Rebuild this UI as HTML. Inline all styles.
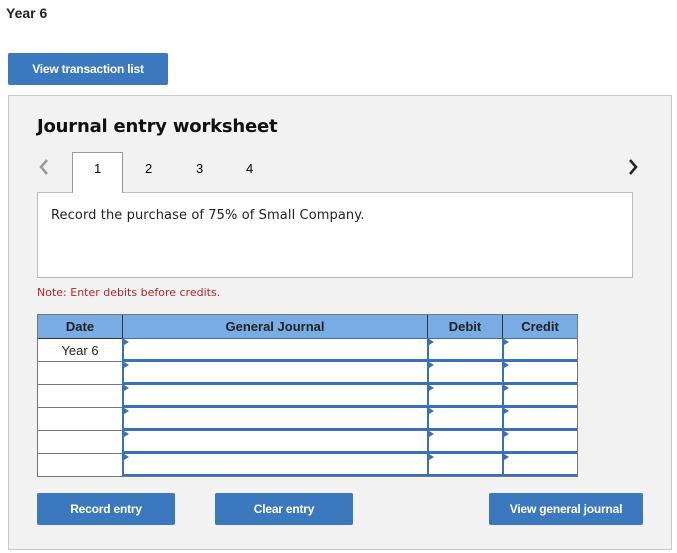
<!DOCTYPE html>
<html><head><style>
*{margin:0;padding:0;box-sizing:border-box}
body{width:677px;height:553px;background:#fff;font-family:"Liberation Sans",Arial,sans-serif;position:relative;overflow:hidden}
.a{position:absolute}
.btn{position:absolute;background:#3b78bd;color:#fff;font-weight:bold;font-size:12px;display:flex;align-items:center;justify-content:center;border-radius:2px;letter-spacing:-0.2px}
.cell{position:absolute;background:#fff}
.in{position:absolute;background:#fff;border-left:2px solid #3a70b5;border-bottom:2px solid #3a70b5;border-top:1px solid #3a70b5}
.in:before{content:"";position:absolute;left:0;top:0;border-left:5px solid #3a70b5;border-top:3px solid transparent;border-bottom:3px solid transparent}
.th{position:absolute;top:319px;text-align:center;font-size:13px;font-weight:bold;color:#222}
</style></head><body>
<div class="a" style="left:6px;top:5px;font-size:14px;font-weight:bold;color:#222">Year 6</div>
<div class="btn" style="left:8px;top:53px;width:160px;height:32px">View transaction list</div>
<div class="a" style="left:8px;top:95px;width:664px;height:455px;background:#f2f2f2;border:1px solid #c8c8c8"></div>
<div class="a" style="left:37px;top:116px;font-size:18px;font-weight:bold;font-family:'DejaVu Sans',sans-serif;color:#111;letter-spacing:-0.2px">Journal entry worksheet</div>
<svg class="a" style="left:38px;top:158px" width="12" height="18"><path d="M9 2 L3 9 L9 16" stroke="#999" stroke-width="2.5" fill="none"/></svg>
<svg class="a" style="left:627px;top:158px" width="12" height="18"><path d="M3 2 L9 9 L3 16" stroke="#222" stroke-width="2.5" fill="none"/></svg>
<div class="a" style="left:37px;top:192px;width:596px;height:86px;background:#fff;border:1px solid #bbb"></div>
<div class="a" style="left:72px;top:152px;width:51px;height:41px;background:#fff;border:1px solid #999;border-bottom:none"></div>
<div class="a" style="left:94px;top:161px;font-size:13px">1</div>
<div class="a" style="left:145px;top:161px;font-size:13px">2</div>
<div class="a" style="left:196px;top:161px;font-size:13px">3</div>
<div class="a" style="left:246px;top:161px;font-size:13px">4</div>
<div class="a" style="left:51px;top:208px;font-size:13px;font-family:'DejaVu Sans',sans-serif;color:#222;letter-spacing:0.1px">Record the purchase of 75% of Small Company.</div>
<div class="a" style="left:37px;top:286px;font-size:11px;font-family:'DejaVu Sans',sans-serif;color:#b0262a">Note: Enter debits before credits.</div>
<div class="a" style="left:37px;top:314px;width:541px;height:163px;background:#777"></div>
<div class="a" style="left:38px;top:315px;width:539px;height:23px;background:#79ace2"></div>
<div class="a" style="left:122px;top:315px;width:1px;height:23px;background:#333"></div>
<div class="a" style="left:427px;top:315px;width:1px;height:23px;background:#333"></div>
<div class="a" style="left:502px;top:315px;width:1px;height:23px;background:#333"></div>
<div class="a" style="left:38px;top:338px;width:539px;height:1px;background:#333"></div>
<div class="th" style="left:38px;width:84px">Date</div>
<div class="th" style="left:123px;width:304px">General Journal</div>
<div class="th" style="left:428px;width:74px">Debit</div>
<div class="th" style="left:503px;width:74px">Credit</div>
<div id="rows"></div>
<script>
var h='';for(var i=0;i<6;i++){var y=339+i*23;
h+='<div class="cell" style="left:38px;top:'+y+'px;width:84px;height:22px"></div>';
h+='<div class="in" style="left:122px;top:'+(y-1)+'px;width:305px;height:23px"></div>';
h+='<div class="in" style="left:427px;top:'+(y-1)+'px;width:75px;height:23px"></div>';
h+='<div class="in" style="left:502px;top:'+(y-1)+'px;width:75px;height:23px"></div>';}
document.getElementById('rows').innerHTML=h;
</script>
<div class="a" style="left:38px;top:343px;width:84px;text-align:center;font-size:13px;color:#222">Year 6</div>
<div class="btn" style="left:37px;top:493px;width:138px;height:32px">Record entry</div>
<div class="btn" style="left:215px;top:493px;width:138px;height:32px">Clear entry</div>
<div class="btn" style="left:489px;top:493px;width:154px;height:32px">View general journal</div>
</body></html>
